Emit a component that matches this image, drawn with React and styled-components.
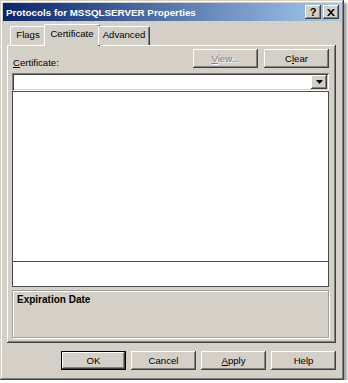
import React from "react";
import styled, { createGlobalStyle, css } from "styled-components";

const Global = createGlobalStyle`
  html, body { margin: 0; padding: 0; background: #ffffff; }
  body { font-family: "Liberation Sans", Arial, sans-serif; font-size: 9.6px; color: #000; }
  * { box-sizing: border-box; }
`;

const FACE = "#d4d0c8";

const raised = css`
  box-shadow: inset -1px -1px #404040, inset 1px 1px #ffffff,
    inset -2px -2px #808080, inset 2px 2px ${FACE};
`;

const Window = styled.div`
  width: 344px;
  height: 380px;
  background: ${FACE};
  padding: 3px;
  display: flex;
  flex-direction: column;
  box-shadow: inset -1px -1px #404040, inset 1px 1px ${FACE},
    inset -2px -2px #808080, inset 2px 2px #ffffff,
    3px 3px 2px rgba(0, 0, 0, 0.35);
`;

const TitleBar = styled.div`
  height: 18px;
  display: flex;
  align-items: center;
  padding: 0 2px 0 3px;
  background: linear-gradient(to right, #0a246a, #a6caf0);
`;

const TitleText = styled.span`
  flex: 1;
  color: #fff;
  font-weight: bold;
  font-size: 9.8px;
  letter-spacing: 0;
  white-space: nowrap;
`;

const CaptionButtons = styled.div`
  display: flex;
  gap: 2px;
`;

const CaptionButton = styled.div`
  width: 16px;
  height: 14px;
  background: ${FACE};
  ${raised};
  display: flex;
  align-items: center;
  justify-content: center;
  font-weight: bold;
  font-size: 11px;
  line-height: 1;
  color: #000;
`;

const Body = styled.div`
  flex: 1;
  display: flex;
  flex-direction: column;
  padding: 3px 5px 7px 4px;
`;

const TabStrip = styled.div`
  display: flex;
  align-items: flex-end;
  height: 21px;
  padding-left: 3px;
  position: relative;
  z-index: 1;
`;

const Tab = styled.div`
  width: ${(p) => p.$w}px;
  height: ${(p) => (p.$active ? 22 : 19)}px;
  margin: 0 ${(p) => (p.$active ? -2 : 0)}px ${(p) => (p.$active ? -1 : 0)}px;
  background: ${FACE};
  border-top: 1px solid #ffffff;
  border-left: 1px solid #ffffff;
  border-right: 1px solid #404040;
  box-shadow: inset -1px 0 #808080;
  border-radius: 2px 2px 0 0;
  display: flex;
  justify-content: center;
  padding-top: ${(p) => (p.$active ? 3 : 2)}px;
  font-size: 9.6px;
  white-space: nowrap;
`;

const Panel = styled.div`
  height: 298px;
  background: ${FACE};
  ${raised};
  box-shadow: inset -1px -1px #404040, inset 1px 1px #ffffff,
    inset -2px -2px #808080;
  padding: 4px 7px 5px 5px;
  display: flex;
  flex-direction: column;
`;

const TopRow = styled.div`
  display: flex;
  align-items: flex-end;
  justify-content: space-between;
  height: 19px;
  margin-bottom: 5px;
`;

const Label = styled.span`
  font-size: 9.6px;
  padding-left: 1px;
  margin-bottom: 0px;
`;

const ButtonGroup = styled.div`
  display: flex;
  gap: ${(p) => p.$gap || 6}px;
`;

const Button = styled.div`
  width: 65px;
  height: 19px;
  background: ${FACE};
  ${raised};
  display: flex;
  align-items: center;
  justify-content: center;
  font-size: 9.6px;
  color: ${(p) => (p.$disabled ? "#808080" : "#000")};
  text-shadow: ${(p) => (p.$disabled ? "1px 1px #ffffff" : "none")};
  ${(p) =>
    p.$default &&
    css`
      box-shadow: inset 0 0 0 1px #000, inset -2px -2px #404040,
        inset 2px 2px #ffffff, inset -3px -3px #808080;
    `}
`;

const U = styled.span`
  text-decoration: underline;
`;

const Combo = styled.div`
  height: 18px;
  background: #fff;
  box-shadow: inset 1px 1px #808080, inset -1px -1px #ffffff,
    inset 2px 2px #404040, inset -2px -2px ${FACE};
  display: flex;
  justify-content: flex-end;
  padding: 2px;
`;

const DropButton = styled.div`
  width: 16px;
  height: 14px;
  background: ${FACE};
  ${raised};
  display: flex;
  align-items: center;
  justify-content: center;
`;

const ListBox = styled.div`
  height: 196px;
  background: #fff;
  border: 1px solid #4a4a4a;
  display: flex;
  flex-direction: column;
`;

const ListMain = styled.div`
  flex: 1;
  border-bottom: 1px solid #4a4a4a;
`;

const ListFooter = styled.div`
  height: 24px;
`;

const GroupBox = styled.div`
  margin-top: 3px;
  flex: 1;
  border: 1px solid #a0a0a0;
  box-shadow: inset 1px 1px #ffffff, 1px 1px #ffffff;
  padding: 3px 4px;
`;

const GroupTitle = styled.div`
  font-weight: bold;
  font-size: 10px;
`;

const Footer = styled.div`
  display: flex;
  justify-content: flex-end;
  margin-top: 8px;
  padding-right: 0px;
`;

export default function App() {
  return (
    <>
      <Global />
      <Window>
        <TitleBar>
          <TitleText>Protocols for MSSQLSERVER Properties</TitleText>
          <CaptionButtons>
            <CaptionButton>?</CaptionButton>
            <CaptionButton>
              <svg width="8" height="7" viewBox="0 0 8 7">
                <path d="M0 0h2l2 2.2L6 0h2L5 3.5 8 7H6L4 4.8 2 7H0l3-3.5z" fill="#000" />
              </svg>
            </CaptionButton>
          </CaptionButtons>
        </TitleBar>
        <Body>
          <TabStrip>
            <Tab $w={36}>Flags</Tab>
            <Tab $w={56} $active>Certificate</Tab>
            <Tab $w={52}>Advanced</Tab>
          </TabStrip>
          <Panel>
            <TopRow>
              <Label>
                <U>C</U>ertificate:
              </Label>
              <ButtonGroup>
                <Button $disabled>
                  <span>
                    <U>V</U>iew...
                  </span>
                </Button>
                <Button>
                  <span>
                    C<U>l</U>ear
                  </span>
                </Button>
              </ButtonGroup>
            </TopRow>
            <Combo>
              <DropButton>
                <svg width="7" height="4" viewBox="0 0 7 4">
                  <path d="M0 0h7L3.5 4z" fill="#000" />
                </svg>
              </DropButton>
            </Combo>
            <ListBox>
              <ListMain />
              <ListFooter />
            </ListBox>
            <GroupBox>
              <GroupTitle>Expiration Date</GroupTitle>
            </GroupBox>
          </Panel>
          <Footer>
            <ButtonGroup $gap={5}>
              <Button $default>OK</Button>
              <Button>Cancel</Button>
              <Button>
                <span>
                  <U>A</U>pply
                </span>
              </Button>
              <Button>Help</Button>
            </ButtonGroup>
          </Footer>
        </Body>
      </Window>
    </>
  );
}
